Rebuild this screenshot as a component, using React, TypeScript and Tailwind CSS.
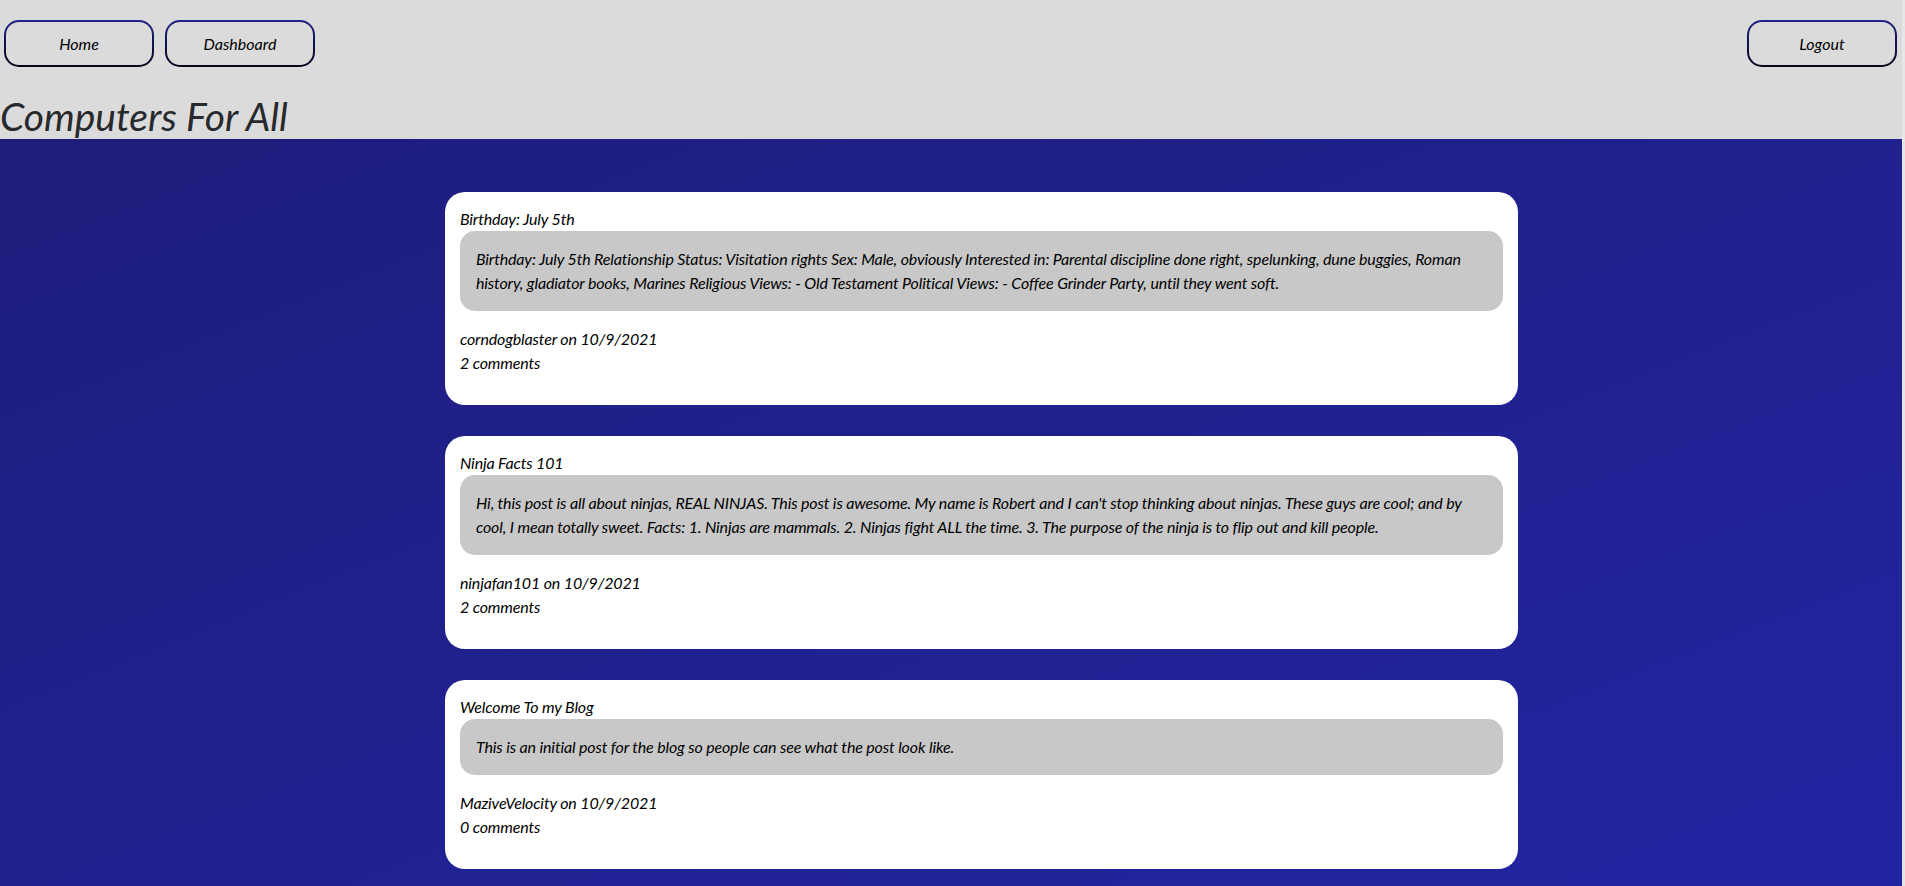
import React from 'react';

interface Post {
  title: string;
  body: string;
  author: string;
  date: string;
  comments: number;
}

const posts: Post[] = [
  {
    title: 'Birthday: July 5th',
    body: 'Birthday: July 5th Relationship Status: Visitation rights Sex: Male, obviously Interested in: Parental discipline done right, spelunking, dune buggies, Roman history, gladiator books, Marines Religious Views: - Old Testament Political Views: - Coffee Grinder Party, until they went soft.',
    author: 'corndogblaster',
    date: '10/9/2021',
    comments: 2,
  },
  {
    title: 'Ninja Facts 101',
    body: "Hi, this post is all about ninjas, REAL NINJAS. This post is awesome. My name is Robert and I can't stop thinking about ninjas. These guys are cool; and by cool, I mean totally sweet. Facts: 1. Ninjas are mammals. 2. Ninjas fight ALL the time. 3. The purpose of the ninja is to flip out and kill people.",
    author: 'ninjafan101',
    date: '10/9/2021',
    comments: 2,
  },
  {
    title: 'Welcome To my Blog',
    body: 'This is an initial post for the blog so people can see what the post look like.',
    author: 'MaziveVelocity',
    date: '10/9/2021',
    comments: 0,
  },
];

const NavButton: React.FC<{ label: string }> = ({ label }) => (
  <button className="w-[150px] h-[47px] rounded-[15px] bg-linear-to-b from-[#23238a] to-[#05051a] p-[2px]">
    <span className="flex h-full w-full items-center justify-center rounded-[13px] bg-[#dbdbdb] text-[16px] italic text-black">
      {label}
    </span>
  </button>
);

const PostCard: React.FC<{ post: Post }> = ({ post }) => (
  <div className="w-[1073px] rounded-[20px] bg-white px-[15px] pt-[15px] pb-[30px] text-[16px] leading-[24px] tracking-[-0.15px] italic text-black">
    <p>{post.title}</p>
    <div className="rounded-[15px] bg-[#c8c8c8] px-[16px] py-[16px]">
      <p>{post.body}</p>
    </div>
    <div className="mt-[16px]">
      <p>
        {post.author} on {post.date}
      </p>
      <p>{post.comments} comments</p>
    </div>
  </div>
);

export default function App() {
  return (
    <div className="flex h-[886px] w-full overflow-hidden font-['Lato','Open_Sans',sans-serif]">
      <div className="flex flex-1 flex-col">
        <header className="h-[139px] bg-[#dbdbdb]">
          <nav className="flex items-center justify-between pt-[20px] pl-[4px] pr-[5px]">
            <div className="flex gap-[11px]">
              <NavButton label="Home" />
              <NavButton label="Dashboard" />
            </div>
            <NavButton label="Logout" />
          </nav>
          <h1 className="mt-[29px] text-[39px] leading-[40px] italic text-[#28292d]">Computers For All</h1>
        </header>
        <main className="flex flex-1 flex-col gap-[31px] bg-linear-to-br from-[#1e1d7c] to-[#2225a2] pt-[53px] pl-[445px]">
          {posts.map((post) => (
            <PostCard key={post.title} post={post} />
          ))}
        </main>
      </div>
      <div className="w-[3px] bg-[#e6e6e6]" />
    </div>
  );
}
